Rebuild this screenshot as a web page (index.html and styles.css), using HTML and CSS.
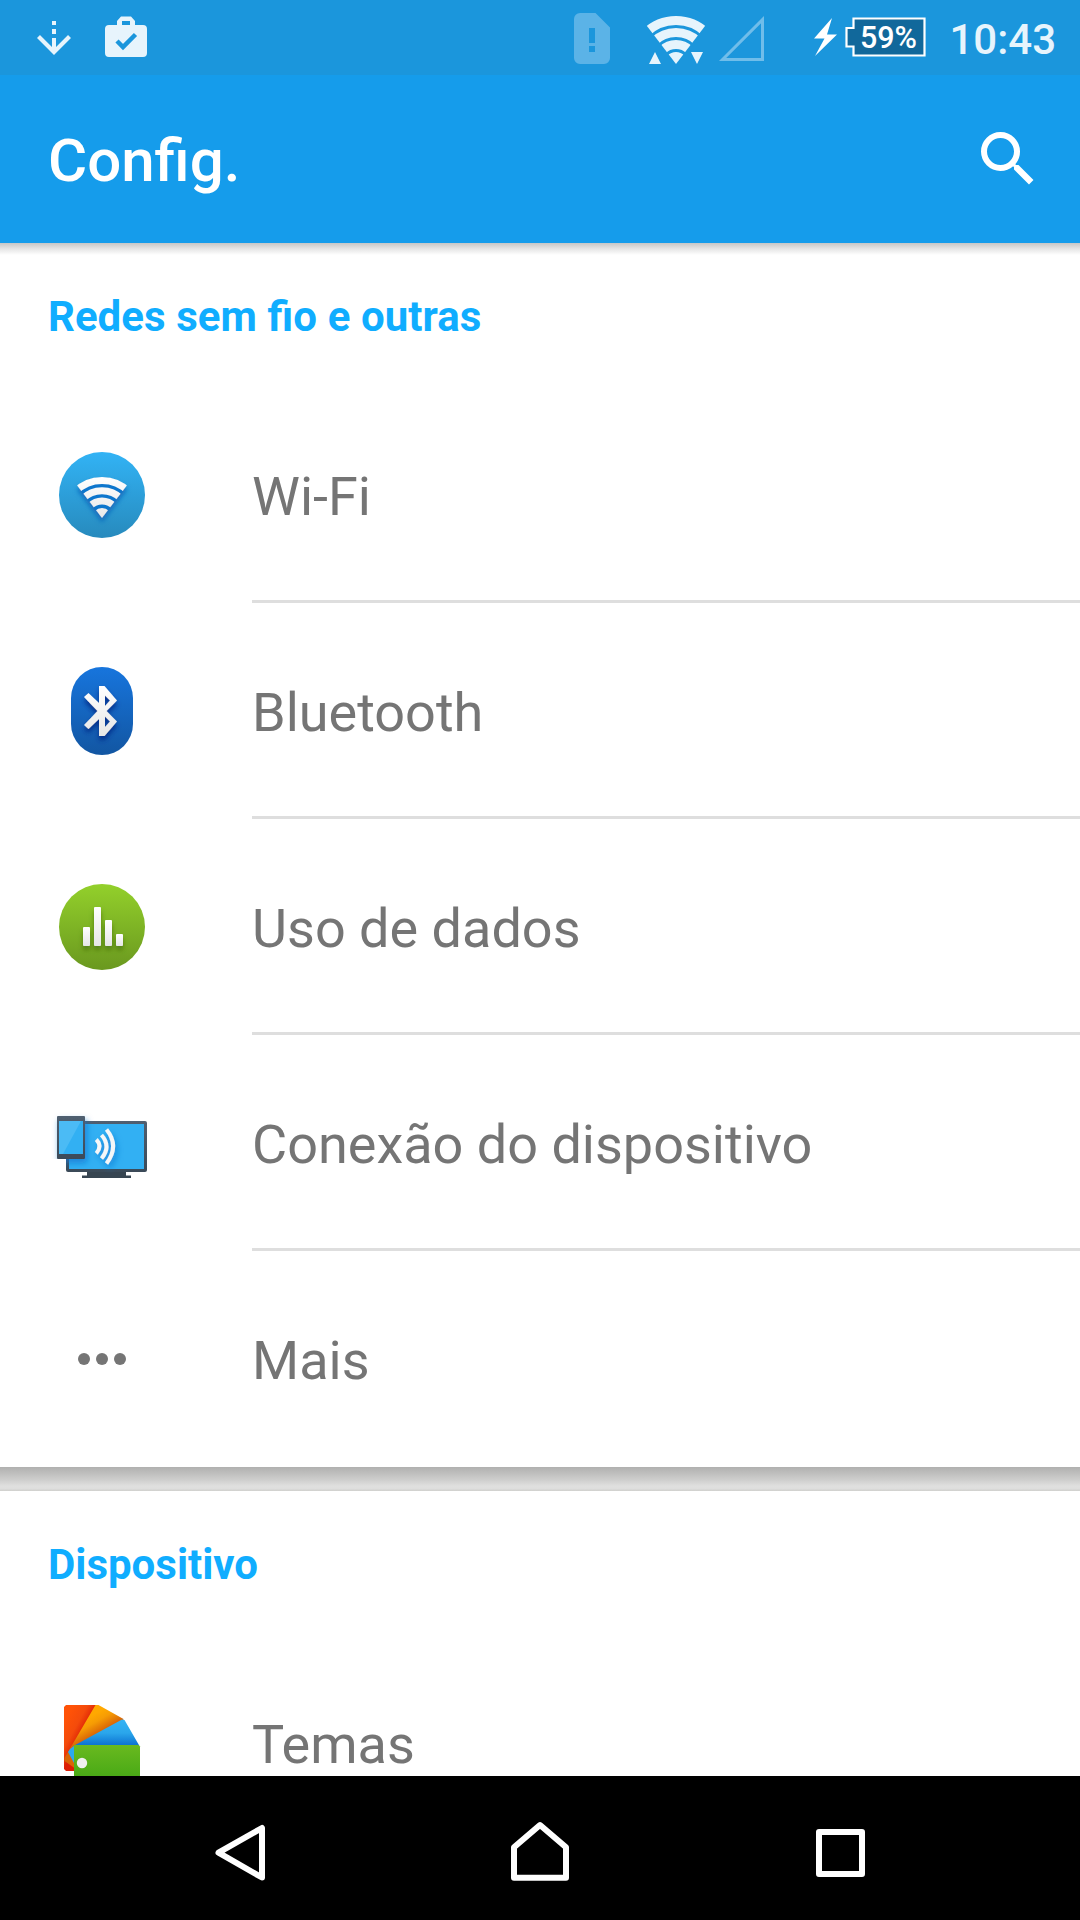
FILE: index.html
```html
<!DOCTYPE html>
<html lang="pt-BR">
<head>
<meta charset="utf-8">
<title>Config.</title>
<link rel="stylesheet" href="styles.css">
</head>
<body>
<div class="screen">
  <header class="top">
    <div class="status">
      <svg class="status-left" width="120" height="75" viewBox="36 0 120 75">
        <g fill="#e7f4fc">
          <path d="M52 21h4v4h-4zM52 29h4v5h-4zM52 38h4v12h-4z"/>
          <path d="M38.500 36.500L54 52L69.500 36.500" fill="none" stroke="#e7f4fc" stroke-width="4.200"/>
          <path fill-rule="evenodd" d="M117 25v-4l4-4.500h10l4 4.500v4h8a4 4 0 0 1 4 4v24a4 4 0 0 1-4 4h-34a4 4 0 0 1-4-4v-24a4 4 0 0 1 4-4zM122 21v4h8v-4z"/>
        </g>
        <path d="M117 41l6 6 12.500-12.500" fill="none" stroke="#1b96dc" stroke-width="4.500"/>
      </svg>
      <svg width="356" height="75" viewBox="574 0 356 75">
        <path fill="#5bb3e7" fill-rule="evenodd" d="M580 13h15.500l14.500 14.500v30.500a6 6 0 0 1-6 6h-24a6 6 0 0 1-6-6v-39a6 6 0 0 1 6-6zM589 28v15h6v-15zM589 46v6h6v-6z"/>
        <clipPath id="wedge"><path d="M676 64L637.400 13.400V0h77.200v13.400z"/></clipPath>
        <g clip-path="url(#wedge)" fill="none" stroke="#e7f4fc" stroke-width="9">
          <circle cx="676" cy="64" r="43.500"/><circle cx="676" cy="64" r="31.500"/><circle cx="676" cy="64" r="19.500"/>
          <circle cx="676" cy="64" r="6" stroke-width="12"/>
        </g>
        <path fill="#e7f4fc" d="M649 64l6-12 6 12zM691 52h12l-6 12z"/>
        <path d="M722.600 59.500H762.500V19.600z" fill="none" stroke="#70bdea" stroke-width="3"/>
        <path fill="#fff" d="M832 18L814 38.500h10.500L815 56L837 34.500H827z"/>
        <path d="M853.500 18.500h71v37h-71v-9h-7v-18.500h7z" fill="#11689b" stroke="#fff" stroke-width="2.200"/>
        <text class="battery" x="860" y="48" textLength="57" lengthAdjust="spacingAndGlyphs">59%</text>
      </svg>
      <span class="clock">10:43</span>
    </div>
    <div class="appbar">
      <h1>Config.</h1>
      <svg class="search" width="72" height="72" viewBox="0 0 24 24"><path fill="#fff" d="M15.500 14h-.79l-.28-.27A6.470 6.470 0 0 0 16 9.500 6.500 6.500 0 1 0 9.500 16c1.610 0 3.090-.59 4.230-1.570l.27.28v.79l5 4.990L20.490 19l-4.990-5zm-6 0C7.010 14 5 11.990 5 9.500S7.010 5 9.500 5 14 7.010 14 9.500 11.990 14 9.500 14z"/></svg>
    </div>
  </header>

  <main class="content">
    <section class="card card-first">
      <h2>Redes sem fio e outras</h2>
      <div class="row">
        <svg class="icon" viewBox="48 441 108 108">
          <defs>
            <linearGradient id="gw" x2="0" y2="1"><stop stop-color="#32b3f5"/><stop offset="1" stop-color="#278abd"/></linearGradient>
            <linearGradient id="white" gradientUnits="userSpaceOnUse" x1="0" x2="0" y1="477" y2="518"><stop stop-color="#fff"/><stop offset="1" stop-color="#e8e8e8"/></linearGradient>
            <clipPath id="wedge2"><path d="M102 518L68 473.500V460h68v13.500z"/></clipPath>
            <filter id="drop" x="-30%" y="-30%" width="160%" height="180%"><feDropShadow dx="0" dy="4" stdDeviation="2.500" flood-color="#0a62b8" flood-opacity=".85"/></filter>
          </defs>
          <circle cx="102" cy="495" r="43" fill="url(#gw)"/>
          <g filter="url(#drop)">
            <path d="M102 518L77.500 485.500A41 41 0 0 1 126.500 485.500z" fill="#0f76cd"/>
            <g clip-path="url(#wedge2)" fill="none" stroke="url(#white)" stroke-width="7">
              <circle cx="102" cy="518" r="37.500"/><circle cx="102" cy="518" r="27.300"/><circle cx="102" cy="518" r="17"/>
              <circle cx="102" cy="518" r="5" stroke-width="10"/>
            </g>
          </g>
        </svg>
        <div class="label">Wi-Fi</div>
      </div>
      <div class="row">
        <svg class="icon" viewBox="48 657 108 108">
          <defs>
            <linearGradient id="gb" x2="0" y2="1"><stop stop-color="#1775dd"/><stop offset="1" stop-color="#1256a2"/></linearGradient>
            <linearGradient id="gbw" x2="0" y2="1"><stop stop-color="#fff"/><stop offset="1" stop-color="#e6e6e6"/></linearGradient>
            <filter id="dropb" x="-30%" y="-30%" width="160%" height="180%"><feDropShadow dx="0" dy="4" stdDeviation="2.500" flood-color="#022a86" flood-opacity=".9"/></filter>
          </defs>
          <rect x="71" y="667" width="62" height="88" rx="31" fill="url(#gb)"/>
          <path filter="url(#dropb)" fill="url(#gbw)" fill-rule="evenodd" d="M99 686h5.500L117 700.500 106.500 711 117 721.500 104.500 736H99v-17l-10.500 10-4.500-4 13.500-14L84 697l4.500-4L99 703zM105 695.500v10.500l5-5.500zM105 716.500v10.500l5-5.500z"/>
        </svg>
        <div class="label">Bluetooth</div>
      </div>
      <div class="row">
        <svg class="icon" viewBox="48 873 108 108">
          <defs>
            <linearGradient id="gd" x2="0" y2="1"><stop stop-color="#93d02b"/><stop offset="1" stop-color="#6a981f"/></linearGradient>
            <filter id="dropd" x="-30%" y="-30%" width="160%" height="180%"><feDropShadow dx="0" dy="4" stdDeviation="2.500" flood-color="#426c0c" flood-opacity=".7"/></filter>
          </defs>
          <circle cx="102" cy="927" r="43" fill="url(#gd)"/>
          <g filter="url(#dropd)" fill="url(#gbw)">
            <rect x="83" y="927" width="7" height="19" rx="1"/><rect x="94" y="907" width="7" height="39" rx="1"/><rect x="105" y="920" width="7" height="26" rx="1"/><rect x="116" y="934" width="7" height="12" rx="1"/>
          </g>
        </svg>
        <div class="label">Uso de dados</div>
      </div>
      <div class="row">
        <svg class="icon" viewBox="48 1089 108 108">
          <defs>
            <linearGradient id="gf" x2="0" y2="1"><stop stop-color="#505f70"/><stop offset="1" stop-color="#3b4a58"/></linearGradient>
            <filter id="dropp" x="-30%" y="-20%" width="190%" height="160%"><feDropShadow dx="2" dy="4" stdDeviation="3" flood-color="#0873cf" flood-opacity=".7"/></filter>
            <clipPath id="tv"><path d="M50 1100h97v72H66v-13H50z"/></clipPath>
          </defs>
          <path fill="#374551" d="M87 1172h39v3.500h5v2.500H82v-2.500h5z"/>
          <rect x="66" y="1121" width="81" height="51" rx="2" fill="url(#gf)"/>
          <rect x="69" y="1124" width="75" height="45" fill="#32b0f3"/>
          <g clip-path="url(#tv)"><rect x="57" y="1116" width="28" height="43" rx="1" fill="url(#gf)" filter="url(#dropp)"/></g>
          <rect x="59" y="1121" width="24" height="33" fill="#32b0f3"/>
          <path d="M59 1121h22l-18 33h-4z" fill="#4bbbf5"/>
          <g filter="url(#dropp)" fill="none" stroke="#f5f7f8" stroke-width="4">
            <path d="M96.300 1139.500q6.500 6.800 0 13.800M101.500 1135q10 11.500 0 23.500M106.500 1129.500q13.300 16.500 0 34"/>
          </g>
        </svg>
        <div class="label">Conexão do dispositivo</div>
      </div>
      <div class="row row-last">
        <svg class="icon" viewBox="48 1305 108 108"><g fill="#757575"><circle cx="84" cy="1359" r="6"/><circle cx="102" cy="1359" r="6"/><circle cx="120" cy="1359" r="6"/></g></svg>
        <div class="label">Mais</div>
      </div>
    </section>

    <div class="gap"></div>

    <section class="card">
      <h2>Dispositivo</h2>
      <div class="row">
        <svg class="icon" viewBox="48 1689 108 108">
          <defs>
            <linearGradient id="tr" gradientUnits="userSpaceOnUse" x1="64" y1="1722" x2="84" y2="1733"><stop stop-color="#ff5207"/><stop offset=".55" stop-color="#f44b0b"/><stop offset="1" stop-color="#dc1e05"/></linearGradient>
            <linearGradient id="to" gradientUnits="userSpaceOnUse" x1="91" y1="1716" x2="100" y2="1732"><stop stop-color="#ffa800"/><stop offset=".4" stop-color="#f69c04"/><stop offset="1" stop-color="#d96506"/></linearGradient>
            <linearGradient id="tb" gradientUnits="userSpaceOnUse" x1="0" y1="1720" x2="0" y2="1746"><stop stop-color="#34b2f4"/><stop offset=".5" stop-color="#2aa6eb"/><stop offset="1" stop-color="#0b6fd0"/></linearGradient>
            <linearGradient id="tg" x2="0" y2="1"><stop stop-color="#69b91f"/><stop offset="1" stop-color="#35a011"/></linearGradient>
          </defs>
          <path fill="url(#tr)" d="M66 1705h30l3 2-24 42v22h-9l-2-2v-62z"/>
          <path fill="url(#to)" d="M95.500 1705h3l25 14-1 3-48 25v21l-10-7v-3z"/>
          <path fill="url(#tb)" d="M122 1719.500l2.500.5 15 26H74l-2.500 1z"/>
          <path fill="#2ba9ee" d="M74 1746v17l-6-11 2-3z"/>
          <path fill="url(#tg)" d="M74 1745h64.500l1.500 1.500V1797H74z"/>
          <circle cx="82" cy="1763" r="5.200" fill="#f0f0f0"/>
        </svg>
        <div class="label">Temas</div>
      </div>
    </section>
  </main>

  <nav class="nav">
    <svg width="60" height="72" viewBox="210 1812 60 72"><path d="M262 1828v49.500L218.500 1852.700z"/></svg>
    <svg width="64" height="72" viewBox="508 1812 64 72"><path d="M514 1877.800V1847.300L540 1825 566 1847.300V1877.800z"/></svg>
    <svg width="60" height="72" viewBox="810 1812 60 72"><path d="M819 1832h43v42h-43z"/></svg>
  </nav>
</div>
</body>
</html>
```
FILE: styles.css
```css
* { box-sizing: border-box; }
body { margin: 0; font-family: Roboto, sans-serif; background: #fff; }
svg { display: block; flex: none; }
h1, h2 { margin: 0; }
.screen { width: 1080px; height: 1920px; display: flex; flex-direction: column; overflow: hidden; }
.top { flex: none; color: #fff; }
.status { height: 75px; background: #1b96dc; display: flex; align-items: center; padding: 0 24px 0 36px; }
.status-left { margin-right: auto; }
.battery { font-size: 32px; font-weight: 500; fill: #fff; }
.clock { width: 126px; padding-top: 5px; text-align: right; font-size: 42px; font-weight: 500; line-height: 72px; color: #e7f4fc; }
.appbar { height: 168px; background: #159ceb; display: flex; align-items: center; justify-content: space-between; padding: 0 36px 0 48px; }
.appbar h1 { font-size: 60px; font-weight: 500; line-height: 70px; padding-top: 4px; }
.content { flex: 1; min-height: 0; overflow: hidden; }
.card { background: #fff; }
.card-first { background: linear-gradient(#c6c6c6, #e6e6e6 6px, #fff 12px); }
.card h2 { height: 144px; padding: 2px 48px 0; font-size: 42px; font-weight: 700; line-height: 144px; word-spacing: 0.3px; color: #10adff; }
.row { height: 216px; display: flex; align-items: center; padding-left: 48px; }
.icon { width: 108px; height: 108px; margin-right: 96px; }
.label { flex: 1; height: 216px; line-height: 216px; padding-top: 2px; font-size: 54px; color: #757575; border-bottom: 3px solid #dedede; }
.row-last .label { border-bottom: 0; }
.gap { height: 24px; background: linear-gradient(#b0b0af, #cfcfce 55%, #e0e0df 80%, #dededd 90%, #cfcfcc); }
.nav { flex: none; height: 144px; background: #000; display: flex; align-items: center; justify-content: space-between; padding: 0 210px; }
.nav path { fill: none; stroke: #fff; stroke-width: 6; stroke-linejoin: round; }
```
